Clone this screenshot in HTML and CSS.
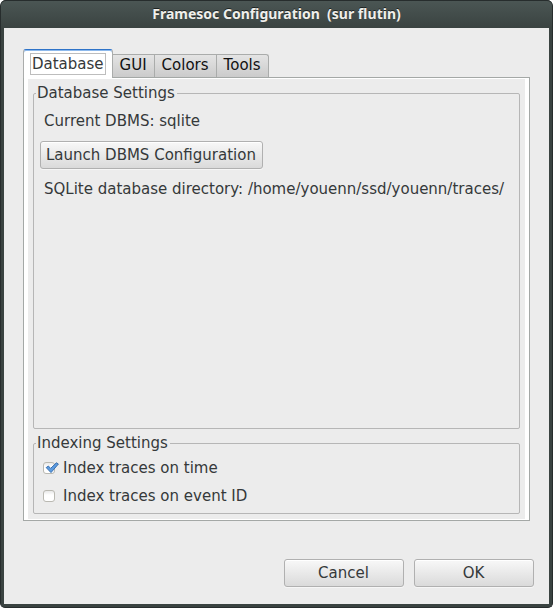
FILE: index.html
```html
<!DOCTYPE html>
<html lang="en">
<head>
<meta charset="utf-8">
<title>Framesoc Configuration</title>
<link rel="stylesheet" href="styles.css">
</head>
<body>
<div class="window">
  <header class="titlebar"><h1 class="title">Framesoc Configuration&nbsp; (sur flutin)</h1></header>
  <main class="content">
    <div class="tabs" role="tablist">
      <button class="tab tab-active" type="button" role="tab" id="tab-database" aria-selected="true" aria-controls="panel-database"><span class="tab-focus">Database</span></button>
      <button class="tab" type="button" role="tab" aria-selected="false">GUI</button>
      <button class="tab" type="button" role="tab" aria-selected="false">Colors</button>
      <button class="tab" type="button" role="tab" aria-selected="false">Tools</button>
    </div>
    <section class="panel" role="tabpanel" id="panel-database" aria-labelledby="tab-database">
      <fieldset class="group group-grow">
        <legend>Database Settings</legend>
        <div class="rows">
          <p class="line">Current DBMS: sqlite</p>
          <button class="button" type="button">Launch DBMS Configuration</button>
          <p class="line">SQLite database directory: /home/youenn/ssd/youenn/traces/</p>
        </div>
      </fieldset>
      <fieldset class="group">
        <legend>Indexing Settings</legend>
        <div class="checks">
          <div class="check">
            <span class="box">
              <input type="checkbox" id="on-time" checked>
              <svg class="tick" viewBox="0 0 14 12" aria-hidden="true"><path d="M1.2 5.6 3.4 4 5.6 6.4 11.4.8 13.4 2 6 10.6z"/></svg>
            </span>
            <label for="on-time">Index traces on time</label>
          </div>
          <div class="check">
            <span class="box"><input type="checkbox" id="on-event"></span>
            <label for="on-event">Index traces on event ID</label>
          </div>
        </div>
      </fieldset>
    </section>
    <footer class="actions">
      <button class="button button-wide" type="button">Cancel</button>
      <button class="button button-wide" type="button">OK</button>
    </footer>
  </main>
</div>
</body>
</html>
```
FILE: styles.css
```css
* {
  box-sizing: border-box;
}

body {
  margin: 0;
  background: #fff;
  color: #35393a;
  font: 15px/18px "DejaVu Sans", sans-serif;
}

button {
  font: inherit;
  color: inherit;
}

.window {
  display: flex;
  flex-direction: column;
  min-height: 100vh;
  padding: 0 3px 3px;
  border: 1px solid #272d2d;
  border-top: 0;
  border-radius: 6px 6px 5px 5px;
  background: #3a4341;
}

.titlebar {
  display: flex;
  align-items: center;
  justify-content: center;
  height: 28px;
  margin: 0 -3px;
  border-top: 1px solid #272d2d;
  border-radius: 5px 5px 0 0;
  background: linear-gradient(#4b5654, #3a4341);
}

.title {
  margin: 0;
  padding-bottom: 2px;
  color: #f0efeb;
  font: bold 14px/18px "Noto Sans", sans-serif;
  text-shadow: 0 -1px #1d2322;
}

.content {
  display: flex;
  flex: 1;
  flex-direction: column;
  padding: 21px 15px 17px 19px;
  background: #ececec;
}

.tabs {
  display: flex;
  align-items: flex-end;
}

.tab {
  height: 23px;
  padding: 0 7px 2px;
  border: 1px solid #aaacab;
  border-width: 1px 1px 0 0;
  background: linear-gradient(#e4e4e4, #cbcbcb);
  color: #111;
}

.tab:last-child {
  border-top-right-radius: 3px;
}

.tab-active {
  position: relative;
  height: 29px;
  margin-bottom: -1px;
  padding: 0 6px;
  border: 1px solid #aaacab;
  border-top: 1px solid #2e73c8;
  border-bottom: 0;
  border-radius: 3px 3px 0 0;
  background: #fff;
  box-shadow: inset 0 1px #8db9ec;
  color: #35393a;
}

.tab-focus {
  display: block;
  padding: 1px;
  border: 1px solid #bdbdbd;
}

.panel {
  display: flex;
  flex: 1;
  flex-direction: column;
  gap: 5px;
  margin-right: 4px;
  padding: 6px 9px;
  border: 1px solid #a4a8a6;
  background: #ececec;
  box-shadow: inset 4px 1px #fff, inset -4px -1px #fff;
}

.group {
  min-width: 0;
  margin: 0;
  padding: 0 6px;
  border: 1px solid #b6b6b6;
  border-radius: 2px;
}

.group-grow {
  flex: 1;
}

legend {
  margin-left: -4px;
  padding: 0 2px 0 1px;
}

.rows {
  display: flex;
  flex-direction: column;
  align-items: flex-start;
  gap: 11px;
  padding-top: 10px;
}

.line {
  margin: 0;
  padding: 0 4px;
}

.button {
  height: 28px;
  padding: 0 6px 0 5px;
  border: 1px solid #b0b0b0;
  border-radius: 3px;
  background: linear-gradient(#f8f8f8, #dadada);
  box-shadow: 0 1px #f6f6f6, inset 0 1px #fff;
}

.button-wide {
  width: 120px;
}

.checks {
  display: flex;
  flex-direction: column;
  gap: 10px;
  padding: 7px 3px 8px;
}

.check {
  display: flex;
  align-items: center;
  gap: 8px;
}

.box {
  position: relative;
  display: flex;
}

.box input {
  width: 12px;
  height: 12px;
  margin: 0;
  border: 1px solid #bab9b2;
  border-radius: 3px;
  background: linear-gradient(#e8e8e8, #fff 40%);
  appearance: none;
}

.tick {
  position: absolute;
  top: 0;
  left: 2px;
  width: 14px;
  height: 12px;
  fill: #5b9be0;
  stroke: #3a6fae;
  stroke-linejoin: round;
  pointer-events: none;
}

.actions {
  display: flex;
  justify-content: flex-end;
  gap: 10px;
  margin-top: 38px;
}
```
